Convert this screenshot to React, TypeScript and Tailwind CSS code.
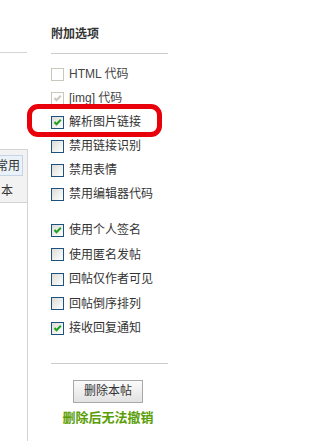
const font = { fontFamily: '"Liberation Sans", "Noto Sans CJK SC", sans-serif' };

type Opt = { label: string; checked?: boolean; disabled?: boolean };

const groupA: Opt[] = [
  { label: "HTML 代码", disabled: true },
  { label: "[img] 代码", disabled: true, checked: true },
  { label: "解析图片链接", checked: true },
  { label: "禁用链接识别" },
  { label: "禁用表情" },
  { label: "禁用编辑器代码" },
];

const groupB: Opt[] = [
  { label: "使用个人签名", checked: true },
  { label: "使用匿名发帖" },
  { label: "回帖仅作者可见" },
  { label: "回帖倒序排列" },
  { label: "接收回复通知", checked: true },
];

function Box({ checked, disabled }: { checked?: boolean; disabled?: boolean }) {
  return (
    <span
      className={
        disabled
          ? "w-[13px] h-[13px] shrink-0 border border-[#cac8bb] bg-white flex items-center justify-center"
          : "w-[13px] h-[13px] shrink-0 border border-[#1c5180] bg-gradient-to-br from-[#dcdcd7] to-[#ffffff] flex items-center justify-center"
      }
    >
      {checked && (
        <svg width="11" height="11" viewBox="0 0 11 11">
          <path
            d="M2.5 5 L4.5 7.2 L8.8 2.8"
            fill="none"
            stroke={disabled ? "#cac8bb" : "#21a121"}
            strokeWidth="2"
          />
        </svg>
      )}
    </span>
  );
}

function Row({ o, tall }: { o: Opt; tall?: boolean }) {
  return (
    <div className={tall ? "h-[24.5px] flex items-center gap-[5px]" : "h-[24px] flex items-center gap-[5px]"}>
      <Box checked={o.checked} disabled={o.disabled} />
      <span className={o.disabled ? "text-[12px] leading-none text-[#444]" : "text-[12px] leading-none text-[#333]"}>
        {o.label}
      </span>
    </div>
  );
}

export default function App() {
  return (
    <div className="relative w-[268px] h-[441px] bg-white flex overflow-hidden" style={font}>
      {/* left panel edge */}
      <div className="w-[28px] shrink-0 flex flex-col">
        <div className="h-[53px] border-b border-[#d4d4d4] w-[27px]" />
        <div className="h-[96px]" />
        <div className="h-[54px] border-t border-r border-b border-[#d4d4d4] bg-[#f2f2f2] flex flex-col overflow-hidden">
          <div className="mt-[5px] h-[21px] w-[23px] border border-l-0 border-[#c5d5e5] bg-[#eaf1f8] flex items-center justify-end pr-[2px] overflow-hidden">
            <span className="text-[12px] text-[#333] whitespace-nowrap">常用</span>
          </div>
          <div className="mt-[6px] flex justify-start pl-[1px]">
            <span className="text-[12px] text-[#333]">本</span>
          </div>
        </div>
        <div className="flex-1 border-r border-[#d4d4d4]" />
      </div>

      {/* options column */}
      <div className="ml-[23px] w-[117px] flex flex-col">
        <div className="h-[54px] flex items-end pb-[10px] border-b border-[#cccccc]">
          <span className="text-[12px] leading-[18px] font-bold text-[#333]">附加选项</span>
        </div>
        <div className="pt-[8px]">
          {groupA.map((o) => (
            <Row key={o.label} o={o} />
          ))}
        </div>
        <div className="pt-[12px]">
          {groupB.map((o) => (
            <Row key={o.label} o={o} tall />
          ))}
        </div>
        <div className="mt-[22px] border-t border-[#cccccc]" />
        <div className="mt-[16px] flex justify-center pr-[3px]">
          <button className="w-[70px] h-[23px] border border-[#a8a8a8] bg-gradient-to-b from-[#fbfbfb] to-[#e2e2e2] text-[12px] text-[#333] leading-none">
            删除本帖
          </button>
        </div>
        <div className="mt-[7px] flex justify-center pr-[3px]">
          <span className="text-[13px] leading-[16px] font-bold text-[#5a9e07]">删除后无法撤销</span>
        </div>
      </div>

      {/* red annotation ring */}
      <div className="absolute left-[27px] top-[104px] w-[135px] h-[33px] border-[5px] border-[#e8000b] rounded-[11px]" />
    </div>
  );
}
